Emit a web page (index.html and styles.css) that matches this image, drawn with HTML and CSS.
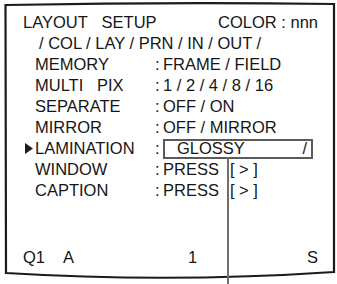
FILE: index.html
```html
<!DOCTYPE html>
<html lang="en">

<head>
    <meta charset="UTF-8">
    <meta name="viewport" content="width=device-width, initial-scale=1.0">
    <title>LAYOUT SETUP</title>
    <link rel="stylesheet" href="styles.css">
</head>

<body>
    <div class="screen">
        <svg class="frame" width="337" height="284" viewBox="0 0 337 284">
            <path d="M5.5 5 Q170 2 334 4 L334 272 Q170 283 6 273 Z" fill="none" stroke="#1b1b1b" stroke-width="2.2" />
        </svg>
        <div class="menu">
            <div class="head">
                <span>LAYOUT&nbsp;&nbsp;&nbsp;SETUP</span>
                <span>COLOR : nnn</span>
            </div>
            <div class="tabs">/ COL / LAY / PRN / IN / OUT /</div>
            <div class="row">
                <span class="mark"></span><span class="label">MEMORY</span><span class="colon">:</span>
                <span class="val">FRAME / FIELD</span>
            </div>
            <div class="row">
                <span class="mark"></span><span class="label">MULTI&nbsp;&nbsp;&nbsp;PIX</span><span class="colon">:</span>
                <span class="val">1 / 2 / 4 / 8 / 16</span>
            </div>
            <div class="row">
                <span class="mark"></span><span class="label">SEPARATE</span><span class="colon">:</span>
                <span class="val">OFF / ON</span>
            </div>
            <div class="row">
                <span class="mark"></span><span class="label">MIRROR</span><span class="colon">:</span>
                <span class="val">OFF / MIRROR</span>
            </div>
            <div class="row">
                <span class="mark">
                    <svg width="8" height="11" viewBox="0 0 8 11"><path d="M0 0 L8 5.5 L0 11 Z" fill="#1c1c1c" /></svg>
                </span><span class="label">LAMINATION</span><span class="colon">:</span>
                <span class="box"><span>GLOSSY</span><span>/</span><i class="lead"></i></span>
            </div>
            <div class="row">
                <span class="mark"></span><span class="label">WINDOW</span><span class="colon">:</span>
                <span class="val">PRESS<span class="btn">[ &gt; ]</span></span>
            </div>
            <div class="row">
                <span class="mark"></span><span class="label">CAPTION</span><span class="colon">:</span>
                <span class="val">PRESS<span class="btn">[ &gt; ]</span></span>
            </div>
        </div>
        <div class="status">
            <span class="q">Q1</span>
            <span class="a">A</span>
            <span class="n">1</span>
            <span class="s">S</span>
        </div>
    </div>
</body>

</html>
```

FILE: styles.css
```css
* {
    margin: 0;
    padding: 0;
    box-sizing: border-box;
}

body {
    background: #fff;
    font-family: "Liberation Sans", Arial, sans-serif;
    font-size: 16.5px;
    color: #161616;
}

.screen {
    position: relative;
    width: 337px;
    height: 284px;
    overflow: hidden;
    padding: 12px 19px 0 23px;
}

.frame {
    position: absolute;
    left: 0;
    top: 0;
}

.menu,
.status {
    position: relative;
}

.head {
    display: flex;
    justify-content: space-between;
    line-height: 21px;
}

.tabs {
    padding-left: 16px;
    line-height: 21px;
}

.row {
    display: flex;
    align-items: center;
    height: 21px;
    white-space: nowrap;
}

.mark {
    display: flex;
    width: 10px;
    margin-left: 2px;
}

.label {
    width: 120px;
}

.colon {
    width: 8px;
}

.btn {
    margin-left: 11px;
}

.box {
    position: relative;
    display: flex;
    justify-content: space-between;
    align-items: center;
    width: 150px;
    height: 20px;
    border: 2px solid #5a5a5a;
    padding: 0 4px 0 12px;
}

.lead {
    position: absolute;
    left: 62px;
    top: 100%;
    width: 2px;
    height: 140px;
    background: #6f6f6f;
}

.status {
    display: flex;
    margin-top: 46px;
    line-height: 21px;
}

.status .q {
    width: 40px;
}

.status .a {
    width: 125px;
}

.status .n {
    flex: 1;
}
```
